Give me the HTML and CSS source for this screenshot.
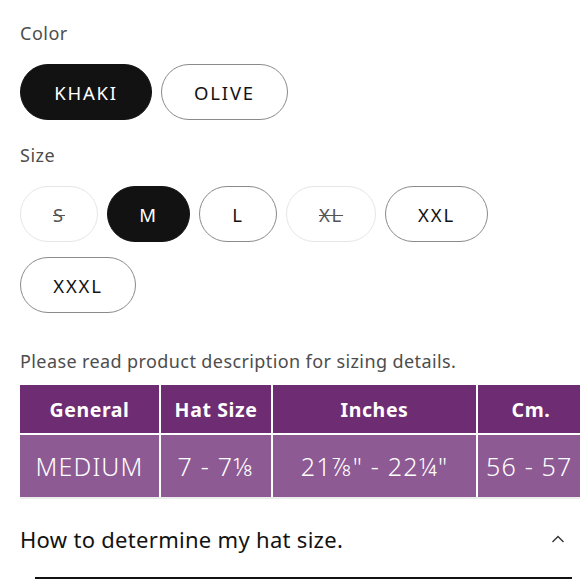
FILE: index.html
```html
<!DOCTYPE html>
<html lang="en">
<head>
<meta charset="utf-8">
<title>Product options</title>
<link rel="stylesheet" href="styles.css">
</head>
<body>
<main class="page">
  <section class="option">
    <div class="label">Color</div>
    <div class="pills">
      <span class="pill pill-active w-khaki">KHAKI</span>
      <span class="pill w-olive">OLIVE</span>
    </div>
  </section>
  <section class="option option-size">
    <div class="label">Size</div>
    <div class="pills">
      <span class="pill pill-off w-s"><s>S</s></span>
      <span class="pill pill-active w-m">M</span>
      <span class="pill w-l">L</span>
      <span class="pill pill-off w-xl"><s>XL</s></span>
      <span class="pill w-xxl">XXL</span>
      <span class="pill w-xxxl">XXXL</span>
    </div>
  </section>
  <p class="note">Please read product description for sizing details.</p>
  <div class="table-wrap">
    <div class="table">
      <div class="th">General</div>
      <div class="th">Hat Size</div>
      <div class="th">Inches</div>
      <div class="th">Cm.</div>
      <div class="td">MEDIUM</div>
      <div class="td">7 - 7⅛</div>
      <div class="td">21⅞" - 22¼"</div>
      <div class="td">56 - 57</div>
    </div>
  </div>
  <div class="accordion">
    <span class="acc-title">How to determine my hat size.</span>
    <svg class="chev" width="14" height="8" viewBox="0 0 14 8"><polyline points="1.5,7 7,1.5 12.5,7" fill="none" stroke="#333" stroke-width="1.4"/></svg>
  </div>
  <div class="rule"></div>
</main>
</body>
</html>
```
FILE: styles.css
```css
html, body {
  margin: 0;
  padding: 0;
  background: #fff;
  overflow: hidden;
}
body {
  font-family: "Noto Sans", "Open Sans", sans-serif;
  color: #121212;
  width: 580px;
  height: 580px;
}
.page {
  padding: 21px 0 0 20px;
}
.label {
  font-size: 18px;
  line-height: 24px;
  color: #4d4d4d;
  letter-spacing: 0.5px;
}
.pills {
  display: flex;
  flex-wrap: wrap;
  column-gap: 9px;
  row-gap: 15px;
  margin-top: 19px;
  width: 480px;
}
.option-size {
  margin-top: 23px;
}
.pill {
  box-sizing: border-box;
  height: 56px;
  border-radius: 28px;
  border: 1.5px solid #8a8a8a;
  display: flex;
  align-items: center;
  justify-content: center;
  font-size: 18.5px;
  letter-spacing: 1.8px;
  color: #121212;
  background: #fff;
}
.pill-active {
  background: #121212;
  border-color: #121212;
  color: #fff;
}
.pill-off {
  border-color: #e6e6e6;
  color: #555;
}
.pill s {
  text-decoration-thickness: 1px;
}
.w-khaki { width: 132px; }
.w-olive { width: 127px; }
.w-s { width: 78px; }
.w-m { width: 83px; }
.w-l { width: 78px; }
.w-xl { width: 90px; }
.w-xxl { width: 103px; }
.w-xxxl { width: 116px; }
.note {
  margin: 36px 0 0 0;
  font-size: 18px;
  line-height: 24px;
  color: #4d4d4d;
  letter-spacing: 0.4px;
}
.table-wrap {
  margin-top: 12px;
  width: 560px;
  overflow: hidden;
}
.table {
  display: grid;
  grid-template-columns: 139px 110px 203px 106px;
  grid-template-rows: 48px 62px;
  gap: 2px;
  background: #fff;
  border-bottom: 2px solid #ececec;
}
.th, .td {
  display: flex;
  align-items: center;
  justify-content: center;
  color: #fff;
  white-space: nowrap;
  overflow: hidden;
}
.th {
  background: #6e2c73;
  font-weight: 700;
  font-size: 19.5px;
  letter-spacing: 0.6px;
}
.td {
  background: #8d5a94;
  font-size: 25px;
  letter-spacing: 1.2px;
  font-weight: 300;
}
.td:last-child {
  justify-content: flex-start;
  padding-left: 8px;
}
.accordion {
  display: flex;
  align-items: center;
  justify-content: space-between;
  margin-top: 26px;
  width: 545px;
}
.acc-title {
  font-size: 22px;
  line-height: 28px;
  color: #121212;
  letter-spacing: 0.3px;
}
.rule {
  margin: 24px 0 0 15px;
  width: 537px;
  height: 2px;
  background: #121212;
}
```
